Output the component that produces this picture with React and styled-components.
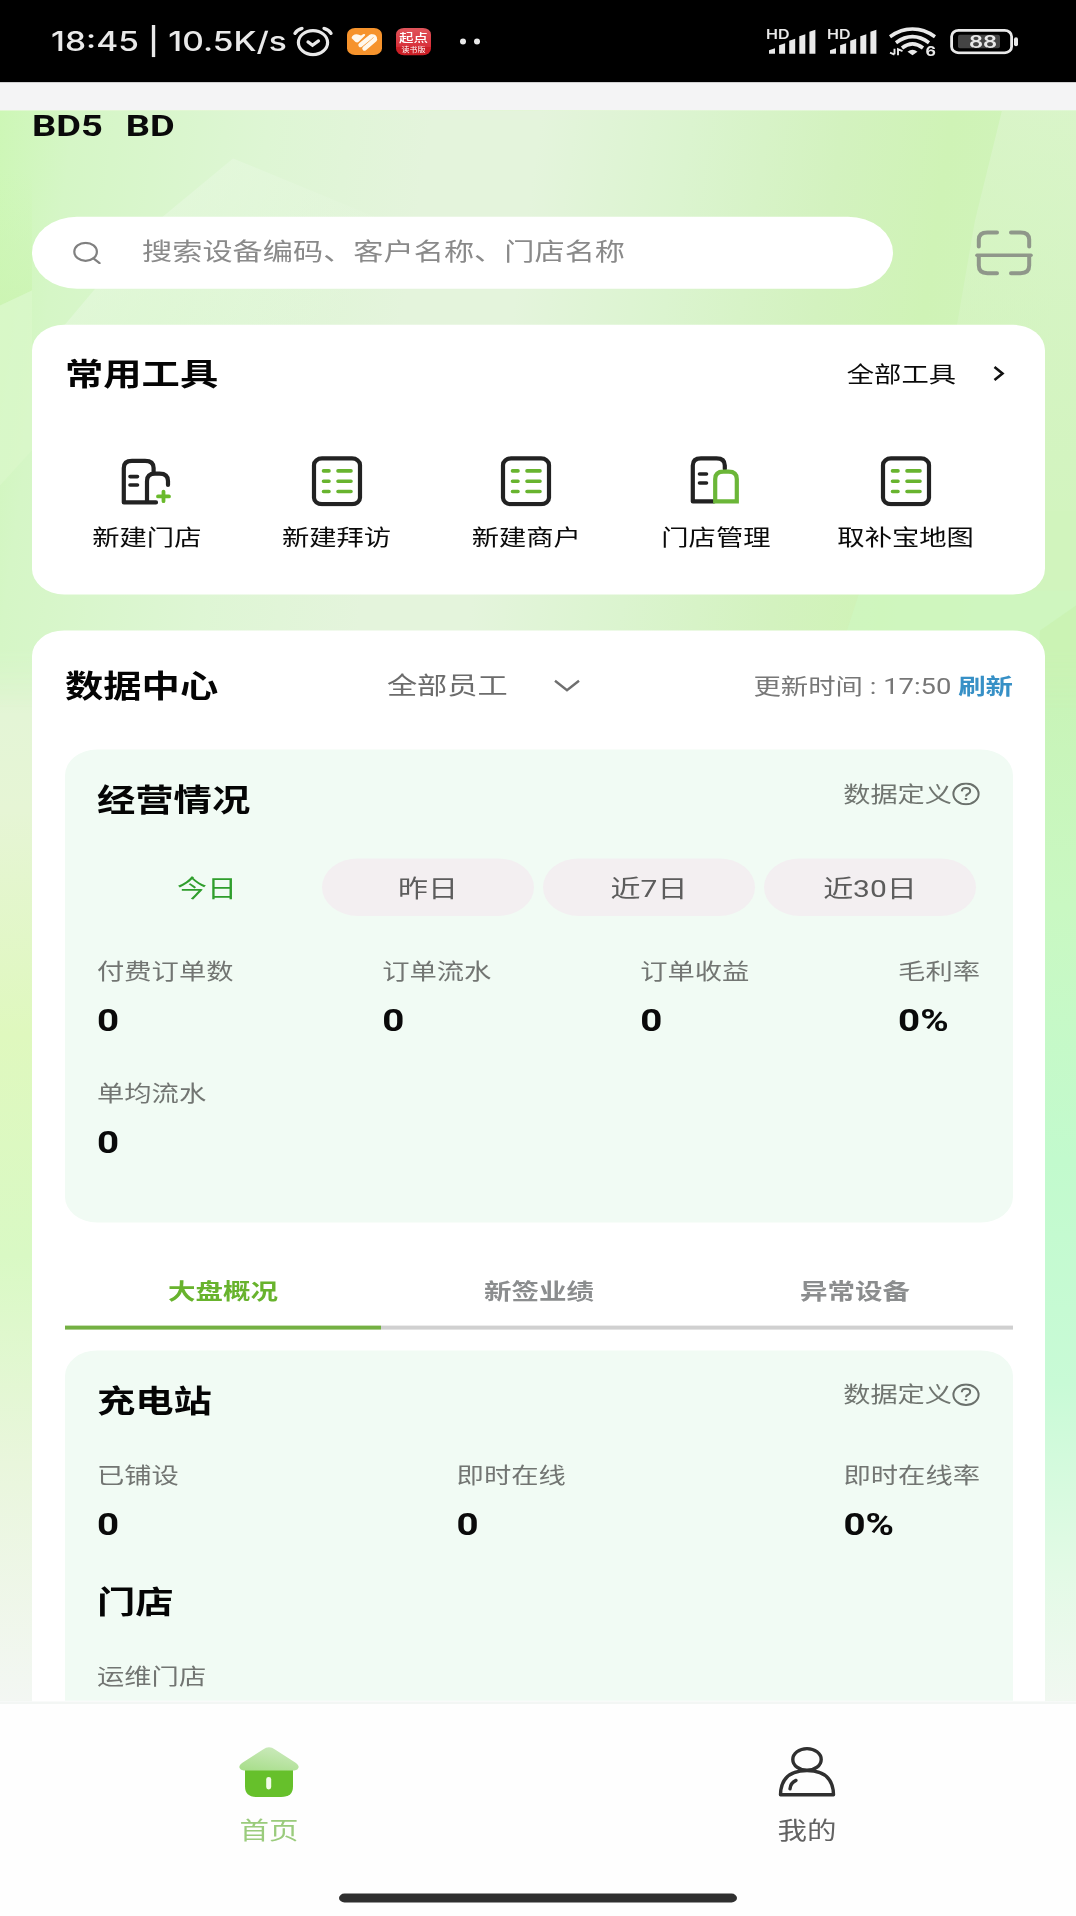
import React, { useState } from 'react';
import styled, { createGlobalStyle, css } from 'styled-components';


const GlobalStyle = createGlobalStyle`
  html, body { margin: 0; padding: 0; }
  body { background-color: #fff; overflow: hidden; }
`;

/* the phone screen is 2395 units tall and gets squeezed into 1916px */
const SQUEEZE = 0.8;

const Viewport = styled('div')`
  width: 1076px;
  height: 1916px;
  overflow: hidden;
`;
const Screen = styled('div')`
  width: 1076px;
  height: 2395px;
  transform: scaleY(${SQUEEZE});
  transform-origin: 0 0;
  display: flex;
  flex-direction: column;
  box-sizing: border-box;
  font-family: Roboto, "Noto Sans CJK SC", sans-serif;
  color: #0a0a0a;
  background-color: #fff;
`;

const Svg = styled('svg').attrs((p) => ({
  width: p.$w,
  height: p.$h / SQUEEZE,
  viewBox: `0 0 ${p.$w} ${p.$h}`,
  preserveAspectRatio: 'none',
  fill: 'none',
}))`
  display: block;
  flex: none;
`;

/* ---------- status bar ---------- */
const StatusBar = styled('div')`
  flex: none;
  height: 103px;
  box-sizing: border-box;
  padding: 1px 58px 0 51px;
  display: flex;
  align-items: center;
  justify-content: space-between;
  background-color: #000;
  color: #e9e9e9;
`;
const StatusGroup = styled('div')`
  display: flex;
  align-items: center;
  gap: ${(p) => p.$gap || 0}px;
`;
const Clock = styled('span')`
  font-family: Inter, sans-serif;
  font-weight: 500;
  font-size: 33.5px;
  line-height: 42px;
  letter-spacing: 0;
  width: 242px;
  white-space: nowrap;
`;
const StatusApps = styled('div')`
  display: flex;
  align-items: center;
  gap: 14px;
`;
const Strip = styled('div')`
  flex: none;
  height: 35px;
  background-color: #f4f4f5;
`;

/* ---------- page ---------- */
const Page = styled('div')`
  flex: none;
  position: relative;
  height: 1989px;
  box-sizing: border-box;
  padding: 0 31px 0 32px;
  background:
    linear-gradient(180deg, #d5f5bd 0%, #d9f6c8 25%, #dcf5cd 34%, #e4f5d6 38%, #e6f5d5 44%, #dff8be 58%, #d9f9c4 72%, #e9f6dc 85%, #f3f7f3 100%) 0 0 / 50% 100% no-repeat,
    linear-gradient(180deg, #d5f5c2 0%, #d0f3b8 28%, #c8f3b5 34%, #c9f8c2 50%, #c2facd 66%, #c8fad6 80%, #e3fae6 92%, #f1f8f1 100%) 100% 0 / 50% 100% no-repeat;

  > * { position: relative; }
`;
const Backdrop = styled('div')`
  && { position: absolute; }
  top: 0; left: 0;
  mask-image: linear-gradient(180deg, #000 90%, transparent 100%);
`;
const NameBar = styled('div')`
  height: 133px;
  box-sizing: border-box;
  padding-left: 0;
  font-size: 38px;
  font-weight: 700;
  line-height: 38px;
  white-space: pre;
  span { margin-right: 23px; }
`;
const SearchRow = styled('div')`
  height: 90px;
  display: flex;
  align-items: center;
  justify-content: space-between;
  padding-right: 12px;
`;
const SearchBox = styled('div')`
  width: 861px;
  height: 90px;
  box-sizing: border-box;
  padding: 0 41px;
  border-radius: 45px;
  display: flex;
  align-items: center;
  gap: 41px;
  background-color: #fff;
  color: #8a8a8a;
  font-size: 30.2px;
  line-height: 84px;
  span { margin-top: -3px; }
`;
const Card = styled('div')`
  margin-top: 45px;
  border-radius: 32px;
  box-sizing: border-box;
  background-color: #fff;
  ${(p) => p.$tools && css`
    height: 337px;
    padding: 39px 40px 0 33px;
  `}
  ${(p) => p.$data && css`
    height: 1339px;
    padding: 47px 32px 0 33px;
    border-radius: 32px 32px 0 0;
  `}
`;
const CardHead = styled('div')`
  height: 46px;
  display: flex;
  align-items: center;
  justify-content: space-between;
`;
const Title = styled('h2')`
  margin: 0;
  font-size: 38.3px;
  font-weight: 700;
  line-height: 46px;
  color: #050505;
`;
const MoreLink = styled('div')`
  display: flex;
  align-items: center;
  gap: 37px;
  font-size: 27.3px;
  line-height: 46px;
  svg { margin-top: -3px; }
`;
const Tools = styled('div')`
  display: grid;
  grid-template-columns: repeat(5, 189.7px);
  margin: 79px 0 0 -13px;
`;
const Tool = styled('div')`
  display: flex;
  flex-direction: column;
  align-items: center;
  font-size: 27.3px;
  line-height: 40px;
  white-space: nowrap;
  svg { margin-bottom: 19px; }
`;

/* ---------- data center ---------- */
const Picker = styled('div')`
  display: flex;
  align-items: center;
  gap: 46px;
  margin-right: 5px;
  font-size: 30.2px;
  line-height: 46px;
  color: #6c6c6c;
`;
const Updated = styled('div')`
  font-size: 27.4px;
  line-height: 46px;
  color: #777;
  white-space: pre;
  b { color: #3790c6; }
`;
const Panel = styled('div')`
  height: ${(p) => p.$height}px;
  box-sizing: border-box;
  padding: 41px 33px 0 32px;
  border-radius: ${(p) => (p.$open ? '32px 32px 0 0' : '32px')};
  background-color: #f1fbf4;
`;
const Define = styled('div')`
  display: flex;
  align-items: center;
  height: 34px;
  margin-top: -17px;
  font-size: 27.2px;
  line-height: 34px;
  color: #707570;
`;
const Pills = styled('div')`
  display: grid;
  grid-template-columns: repeat(4, 212px);
  column-gap: 9px;
  margin: 49px 0 0 4px;
`;
const Pill = styled('div')`
  height: 72px;
  border-radius: 36px;
  text-align: center;
  font-size: 30px;
  line-height: 75px;
  background-color: #f3eff1;
  color: #5c5c5c;
  cursor: pointer;
  ${(p) => p.$active && css`
    background-color: transparent;
    color: #2f9e2c;
  `}
`;
const Stats = styled('div')`
  display: flex;
  justify-content: space-between;
  margin-top: ${(p) => p.$top}px;
`;
const Stat = styled('div')`
  font-size: 27.3px;
  line-height: 40px;
  color: #727572;
  white-space: nowrap;
  strong {
    display: block;
    margin-top: 19px;
    font-size: 38.5px;
    line-height: 44px;
    color: #0a0a0a;
  }
`;
const Tabs = styled('div')`
  display: grid;
  grid-template-columns: repeat(3, 1fr);
  height: 76px;
  margin: 58px 0 26px;
`;
const Tab = styled('div')`
  border-bottom: 5px solid #d0d0d0;
  text-align: center;
  font-size: 27.5px;
  font-weight: 700;
  line-height: 58px;
  color: #8b8d8e;
  cursor: pointer;
  ${(p) => p.$active && css`
    color: #68b32d;
    border-bottom-color: #74b043;
  `}
`;
const SubTitle = styled(Title)`
  margin-top: 52px;
`;

/* ---------- bottom navigation ---------- */
const Nav = styled('div')`
  flex: 1;
  position: relative;
  box-sizing: border-box;
  border-top: 3px solid #f3f6f4;
  background-color: #fefefe;
  display: flex;
  flex-direction: column;
  align-items: center;
`;
const NavItems = styled('div')`
  width: 100%;
  height: 237px;
  display: grid;
  grid-template-columns: 1fr 1fr;
`;
const NavItem = styled('div')`
  padding: 53px 0 0;
  display: flex;
  flex-direction: column;
  align-items: center;
  font-size: 29.5px;
  line-height: 40px;
  color: ${(p) => (p.$active ? '#9acb7c' : '#626262')};
  svg { margin-bottom: 22px; }
`;
const HomeBar = styled('div')`
  width: 398px;
  height: 11px;
  border-radius: 6px;
  background-color: #2f2f2f;
`;

/* ---------- icons ---------- */
const AlarmIcon = () => (
  <Svg $w={40} $h={30} stroke='#e9e9e9' strokeWidth='3.2' strokeLinecap='round'>
    <ellipse cx='20' cy='16.2' rx='14.6' ry='12' />
    <path d='M2 7 Q4 3.4 9 2 M38 7 Q36 3.4 31 2' />
    <path d='M15 15.5 L19.5 18.8 L25.5 14.5' />
  </Svg>
);
const OrangeApp = () => (
  <Svg $w={35} $h={27}>
    <rect width='35' height='27' rx='8' ry='6.5' fill='#f6932c' />
    <path d='M4.5 10 Q6 5.5 11 6.5 L14 7.5 L16.5 6 Q19 5.5 18 7.5 L12 13.5 Q10.5 15 8.5 14 Z' fill='#fff8ec' />
    <path d='M13.5 17 L24 8.5' stroke='#fff8ec' strokeWidth='4.4' strokeLinecap='round' />
    <path d='M17.5 20.5 L28 11.5' stroke='#fff8ec' strokeWidth='4.4' strokeLinecap='round' />
    <path d='M24 8 Q29 7 28.5 11.5' stroke='#fff8ec' strokeWidth='3' />
  </Svg>
);
const RedApp = styled('div')`
  width: 35px;
  height: 34px;
  border-radius: 8px;
  overflow: hidden;
  background: linear-gradient(180deg, #e0555b 0%, #d8303a 68%, #cb1f26 70%);
  color: #fff;
  text-align: center;
  white-space: nowrap;
  font-size: 14.5px;
  font-weight: 500;
  line-height: 28px;
  small {
    display: block;
    margin-top: -7px;
    font-size: 8px;
    font-weight: 400;
    line-height: 13px;
  }
`;
const DotsIcon = () => (
  <Svg $w={22} $h={8}>
    <circle cx='4' cy='4' r='3' fill='#e9e9e9' />
    <circle cx='18' cy='4' r='3' fill='#e9e9e9' />
  </Svg>
);
const SignalBox = styled('div')`
  position: relative;
  width: 50px;
  span {
    position: absolute;
    top: -2px; left: -1px;
    font-family: Inter, sans-serif;
    font-size: 16px;
    font-weight: 600;
    line-height: 18px;
  }
`;
const Signal = () => (
  <SignalBox>
    <Svg $w={50} $h={25}>
      {[19.5, 14.5, 10, 5.5, 1].map((top, i) => (
        <path key={top} fill='#e9e9e9' d={`M${2 + i * 10.1} ${top + 2} l6 -2 V25 h-6 Z`} />
      ))}
    </Svg>
    <span>HD</span>
  </SignalBox>
);
const WifiBox = styled('div')`
  position: relative;
  margin-right: 3px;
  span {
    position: absolute;
    right: 0; bottom: -1px;
    font-family: Inter, sans-serif;
    font-size: 16px;
    font-weight: 700;
    line-height: 14px;
  }
`;
const Wifi = () => (
  <WifiBox>
    <Svg $w={47} $h={29} stroke='#e9e9e9' strokeWidth='3.6'>
      <path d='M1 9.5 Q23.5 -6 46 9.5' />
      <path d='M7 15.5 Q23.5 3.5 40 15.5' />
      <path d='M13 20.8 Q23.5 12.5 34 20.8' />
      <path d='M18.5 24.5 Q23.5 20.5 28.5 24.5 L23.5 28 Z' fill='#e9e9e9' stroke='none' />
      <path d='M5.5 21.5 V27 M1 25.5 L5.5 27.5 M9 28 V22 L13.5 24' strokeWidth='1.9' />
    </Svg>
    <span>6</span>
  </WifiBox>
);
const BatteryBox = styled('div')`
  position: relative;
  span {
    position: absolute;
    top: 0; left: 0;
    width: 66px;
    text-align: center;
    font-family: Inter, sans-serif;
    font-size: 22px;
    font-weight: 600;
    line-height: 33px;
  }
`;
const Battery = () => (
  <BatteryBox>
    <Svg $w={68} $h={26}>
      <rect x='1.6' y='1.6' width='60' height='22.4' rx='7' ry='6' stroke='#e9e9e9' strokeWidth='2.8' />
      <rect x='8' y='6' width='42' height='13.5' rx='2' fill='#444' />
      <rect x='64' y='8.5' width='4' height='9' rx='2' fill='#e9e9e9' />
    </Svg>
    <span>88</span>
  </BatteryBox>
);

const SearchIcon = () => (
  <Svg $w={28} $h={23} stroke='#808080' strokeWidth='2.2' strokeLinecap='round'>
    <ellipse cx='12.6' cy='10.2' rx='11.3' ry='9' />
    <path d='M20.4 16.8 L26.6 21.6' />
  </Svg>
);
const ScanIcon = () => (
  <Svg $w={58} $h={46} stroke='#8f978a' strokeLinecap='round'>
    <path d='M3.8 17 V10 Q3.8 2.8 12.5 2.8 H22 M36 2.8 H45.5 Q54.2 2.8 54.2 10 V17' strokeWidth='4' />
    <path d='M3.8 27 V36 Q3.8 43.6 12.5 43.6 H22 M36 43.6 H45.5 Q54.2 43.6 54.2 36 V27' strokeWidth='4' />
    <path d='M2 25.6 H56' strokeWidth='3.6' />
  </Svg>
);
const ChevronRight = () => (
  <Svg $w={12} $h={16} stroke='#111' strokeWidth='2.6'>
    <path d='M1.5 1.5 L9.5 8 L1.5 14.5' />
  </Svg>
);
const ChevronDown = () => (
  <Svg $w={26} $h={14} stroke='#6f6f6f' strokeWidth='2.4'>
    <path d='M1 1.5 L13 11 L25 1.5' />
  </Svg>
);
const ListIcon = () => (
  <Svg $w={52} $h={50}>
    <rect x='3' y='2.4' width='46' height='45.8' rx='8' ry='6.5' stroke='#222' strokeWidth='4.2' />
    {[14.9, 25.2, 35.5].map((y) => (
      <path key={y} d={`M12.5 ${y} H18 M27 ${y} H40`} stroke='#68b42f' strokeWidth='3.6' strokeLinecap='round' />
    ))}
  </Svg>
);
const ShopAddIcon = () => (
  <Svg $w={52} $h={50} strokeLinecap='round' strokeLinejoin='round'>
    <path d='M35 46.4 H2.8 V12 Q2.8 4.8 11 4.8 H24 Q32.6 4.8 32.6 12 V16' stroke='#222' strokeWidth='4.2' />
    <path d='M26 45 V25 Q26 17.6 34 17.6 H38.5 Q47 17.6 47 25 V29' stroke='#222' strokeWidth='4.2' />
    <path d='M9 20.6 H16.5 M9 29 H16.5' stroke='#222' strokeWidth='3.6' />
    <path d='M37 40.4 H48 M42.5 35.6 V45.2' stroke='#6aba2c' strokeWidth='3.8' />
  </Svg>
);
const ShopIcon = () => (
  <Svg $w={52} $h={50} strokeLinejoin='round' strokeLinecap='round'>
    <path d='M24 45.4 H2.8 V9.5 Q2.8 2.3 11 2.3 H26.5 Q34.8 2.3 34.8 9.5 V13' stroke='#222' strokeWidth='4.2' />
    <path d='M9.5 18 H16.5 M9.5 27 H16.5' stroke='#222' strokeWidth='3.6' />
    <path d='M25.2 45.4 V23 Q25.2 15.6 33.5 15.6 H38.5 Q46.8 15.6 46.8 23 V45.4 Z' fill='#fff' stroke='#6bb638' strokeWidth='4.2' strokeLinejoin='miter' />
  </Svg>
);
const HelpIcon = () => (
  <Svg $w={28} $h={23} stroke='#6a706b' strokeWidth='2'>
    <ellipse cx='14' cy='11.5' rx='12.6' ry='10.3' />
    <path d='M9.8 9 Q10 5.6 14 5.6 Q18.2 5.6 18.2 8.8 Q18.2 10.6 16 11.6 Q14 12.4 14 14' />
    <path d='M14 15.7 V17.6' strokeWidth='2.4' />
  </Svg>
);
const HomeIcon = () => (
  <Svg $w={60} $h={51}>
    <defs>
      <linearGradient id='roof' x1='0' y1='1' x2='0.5' y2='0'>
        <stop offset='0' stopColor='#a6dd88' />
        <stop offset='1' stopColor='#c9e9b9' />
      </linearGradient>
    </defs>
    <path d='M6 20 H54 V40 Q54 50.5 42 50.5 H18 Q6 50.5 6 40 Z' fill='#66c02b' />
    <path d='M24 3 Q30 -1.5 36 3 L57 16.5 Q61 19.5 59 22 Q58 24 53 24 H7 Q2 24 1 22 Q-1 19.5 3 16.5 Z' fill='url(#roof)' />
    <rect x='27.2' y='30.5' width='5' height='12.5' rx='2.4' fill='#f2fbe9' />
  </Svg>
);
const UserIcon = () => (
  <Svg $w={58} $h={51} stroke='#303030' strokeWidth='3.4' strokeLinejoin='round' strokeLinecap='round'>
    <ellipse cx='29' cy='13' rx='14.2' ry='10.8' />
    <path d='M2.5 48.3 Q3 24.2 29 24.2 Q55 24.2 55.5 48.3 Z' />
    <path d='M12 42.5 Q12.5 36.5 18 34' />
  </Svg>
);

/* soft green facets behind the search bar and the tools card */
const Facets = () => (
  <Svg $w={1076} $h={600}>
    <defs>
      <linearGradient id='sky' x1='0' y1='0' x2='1' y2='0.08'>
        <stop offset='0' stopColor='#cdf7b6' />
        <stop offset='0.07' stopColor='#d5f6c6' />
        <stop offset='0.25' stopColor='#def6d4' />
        <stop offset='0.4' stopColor='#e4f4dc' />
        <stop offset='0.5' stopColor='#e4f4dc' />
        <stop offset='0.64' stopColor='#dbf4cf' />
        <stop offset='0.78' stopColor='#d3f2bf' />
        <stop offset='0.88' stopColor='#cff3b6' />
        <stop offset='1' stopColor='#d1f4bd' />
      </linearGradient>
      <linearGradient id='ridge' x1='0' y1='0' x2='1' y2='0.4'>
        <stop offset='0' stopColor='#ebf9e6' stopOpacity='0.7' />
        <stop offset='1' stopColor='#ebf9e6' stopOpacity='0' />
      </linearGradient>
      <linearGradient id='edge' x1='0' y1='0' x2='0' y2='1'>
        <stop offset='0' stopColor='#dcf5cd' stopOpacity='0.75' />
        <stop offset='1' stopColor='#d6f4c4' stopOpacity='0.3' />
      </linearGradient>
      <linearGradient id='corner' x1='0' y1='0' x2='0' y2='1'>
        <stop offset='0' stopColor='#cbf6af' stopOpacity='0' />
        <stop offset='1' stopColor='#cbf4b1' stopOpacity='0.8' />
      </linearGradient>
    </defs>
    <rect width='1076' height='600' fill='url(#sky)' />
    <path d='M140 125 L233 48 L420 125 L420 220 L60 220 Z' fill='url(#ridge)' />
    <path d='M0 60 H32 V180 L0 195 Z' fill='url(#corner)' />
    <path d='M0 195 L32 180 V340 L0 375 Z' fill='#daf7c9' opacity='0.8' />
    <path d='M1002 0 H1076 V400 H925 L975 110 Z' fill='url(#edge)' />
    <path d='M847 520 L860 480 H1076 V600 H838 Z' fill='#cff7c1' opacity='0.7' />
    <path d='M1040 520 L1076 495 V600 H1035 Z' fill='#c8f1ad' opacity='0.6' />
  </Svg>
);

const TOOLS = [
  { label: '新建门店', Icon: ShopAddIcon },
  { label: '新建拜访', Icon: ListIcon },
  { label: '新建商户', Icon: ListIcon },
  { label: '门店管理', Icon: ShopIcon },
  { label: '取补宝地图', Icon: ListIcon },
];
const PERIODS = ['今日', '昨日', '近7日', '近30日'];
const TABS = ['大盘概况', '新签业绩', '异常设备'];

const StatRow = ({ top, items }) => (
  <Stats $top={top}>
    {items.map(([label, value]) => (
      <Stat key={label}>
        {label}
        {value && <strong>{value}</strong>}
      </Stat>
    ))}
  </Stats>
);

const OverviewPanel = styled(Panel)`
  margin-top: 56px;
`;

const PanelHead = ({ title }) => (
  <CardHead>
    <Title>{title}</Title>
    <Define>数据定义<HelpIcon /></Define>
  </CardHead>
);

const App = () => {
  const [period, setPeriod] = useState(0);
  const [tab, setTab] = useState(0);

  return (
    <Viewport>
      <GlobalStyle />
      <Screen>
        <StatusBar>
          <StatusGroup>
            <Clock>18:45 | 10.5K/s</Clock>
            <StatusApps>
              <AlarmIcon />
              <OrangeApp />
              <RedApp>起点<small>读书版</small></RedApp>
            </StatusApps>
            <StatusGroup $gap={28}><i /><DotsIcon /></StatusGroup>
          </StatusGroup>
          <StatusGroup $gap={11}>
            <Signal />
            <Signal />
            <Wifi />
            <Battery />
          </StatusGroup>
        </StatusBar>
        <Strip />
        <Page>
          <Backdrop><Facets /></Backdrop>
          <NameBar><span>BD5</span>BD</NameBar>
          <SearchRow>
            <SearchBox>
              <SearchIcon />
              <span>搜索设备编码、客户名称、门店名称</span>
            </SearchBox>
            <ScanIcon />
          </SearchRow>

          <Card $tools>
            <CardHead>
              <Title>常用工具</Title>
              <MoreLink>全部工具<ChevronRight /></MoreLink>
            </CardHead>
            <Tools>
              {TOOLS.map(({ label, Icon }) => (
                <Tool key={label}><Icon />{label}</Tool>
              ))}
            </Tools>
          </Card>

          <Card $data>
            <CardHead>
              <Title>数据中心</Title>
              <Picker>全部员工<ChevronDown /></Picker>
              <Updated>更新时间 : 17:50 <b>刷新</b></Updated>
            </CardHead>
            <OverviewPanel $height={591}>
              <PanelHead title='经营情况' />
              <Pills>
                {PERIODS.map((name, i) => (
                  <Pill key={name} $active={i === period} onClick={() => setPeriod(i)}>{name}</Pill>
                ))}
              </Pills>
              <StatRow top={50} items={[['付费订单数', '0'], ['订单流水', '0'], ['订单收益', '0'], ['毛利率', '0%']]} />
              <StatRow top={49} items={[['单均流水', '0']]} />
            </OverviewPanel>
            <Tabs>
              {TABS.map((name, i) => (
                <Tab key={name} $active={i === tab} onClick={() => setTab(i)}>{name}</Tab>
              ))}
            </Tabs>
            <Panel $height={438} $open>
              <PanelHead title='充电站' />
              <StatRow top={50} items={[['已铺设', '0'], ['即时在线', '0'], ['即时在线率', '0%']]} />
              <SubTitle>门店</SubTitle>
              <StatRow top={50} items={[['运维门店', '']]} />
            </Panel>
          </Card>
        </Page>

        <Nav>
          <NavItems>
            <NavItem $active><HomeIcon />首页</NavItem>
            <NavItem><UserIcon />我的</NavItem>
          </NavItems>
          <HomeBar />
        </Nav>
      </Screen>
    </Viewport>
  );
};

export default App;
